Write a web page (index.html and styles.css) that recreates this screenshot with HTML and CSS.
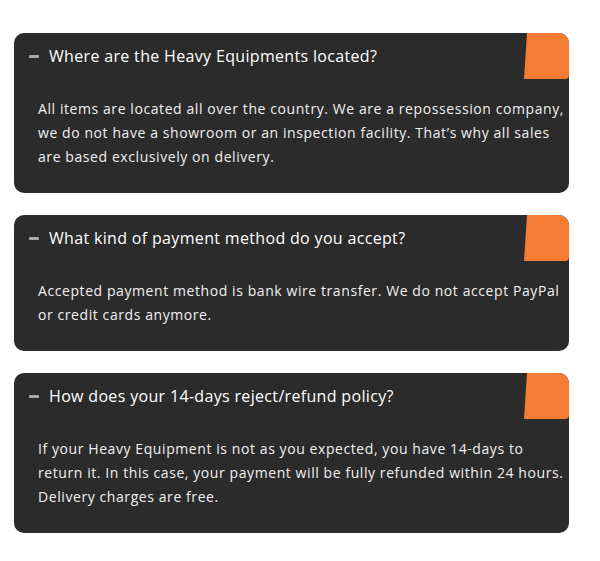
FILE: index.html
```html
<!DOCTYPE html>
<html lang="en">
<head>
    <meta charset="UTF-8">
    <meta name="viewport" content="width=device-width, initial-scale=1.0">
    <title>FAQ - Heavy Equipment</title>
    <link rel="stylesheet" href="styles.css">
</head>
<body>
    <div class="faq-list">
        <div class="faq-item">
            <div class="faq-question">
                <span class="faq-toggle"></span>
                <span>Where are the Heavy Equipments located?</span>
            </div>
            <div class="faq-answer">
                All items are located all over the country. We are a repossession company, we do not have a showroom or an inspection facility. That’s why all sales are based exclusively on delivery.
            </div>
        </div>

        <div class="faq-item">
            <div class="faq-question">
                <span class="faq-toggle"></span>
                <span>What kind of payment method do you accept?</span>
            </div>
            <div class="faq-answer">
                Accepted payment method is bank wire transfer. We do not accept PayPal or credit cards anymore.
            </div>
        </div>

        <div class="faq-item">
            <div class="faq-question">
                <span class="faq-toggle"></span>
                <span>How does your 14-days reject/refund policy?</span>
            </div>
            <div class="faq-answer">
                If your Heavy Equipment is not as you expected, you have 14-days to return it. In this case, your payment will be fully refunded within 24 hours. Delivery charges are free.
            </div>
        </div>
    </div>
</body>
</html>
```

FILE: styles.css
```css
* {
    margin: 0;
    padding: 0;
    box-sizing: border-box;
}

body {
    font-family: 'Open Sans', 'DejaVu Sans', sans-serif;
    background: #ffffff;
    padding: 33px 31px 0 14px;
}

.faq-list {
    display: flex;
    flex-direction: column;
    gap: 22px;
}

.faq-item {
    position: relative;
    background: #2b2b2b;
    border-radius: 10px;
    overflow: hidden;
}

/* orange corner tab */
.faq-item::after {
    content: '';
    position: absolute;
    top: 0;
    right: 0;
    width: 45px;
    height: 46px;
    background: #f47c35;
    border-radius: 0 10px 4px 0;
    clip-path: polygon(3px 0, 100% 0, 100% 100%, 0 100%);
}

.faq-question {
    display: flex;
    align-items: center;
    gap: 10px;
    height: 46px;
    padding-left: 15px;
    color: #ffffff;
    font-size: 16px;
    letter-spacing: 0.33px;
}

.faq-toggle {
    width: 10px;
    height: 3px;
    border-radius: 1px;
    background: #a9a9a9;
}

.faq-answer {
    padding: 18px 2px 24px 24px;
    color: #f1f1f1;
    font-size: 14px;
    line-height: 24px;
    letter-spacing: 0.58px;
}
```
